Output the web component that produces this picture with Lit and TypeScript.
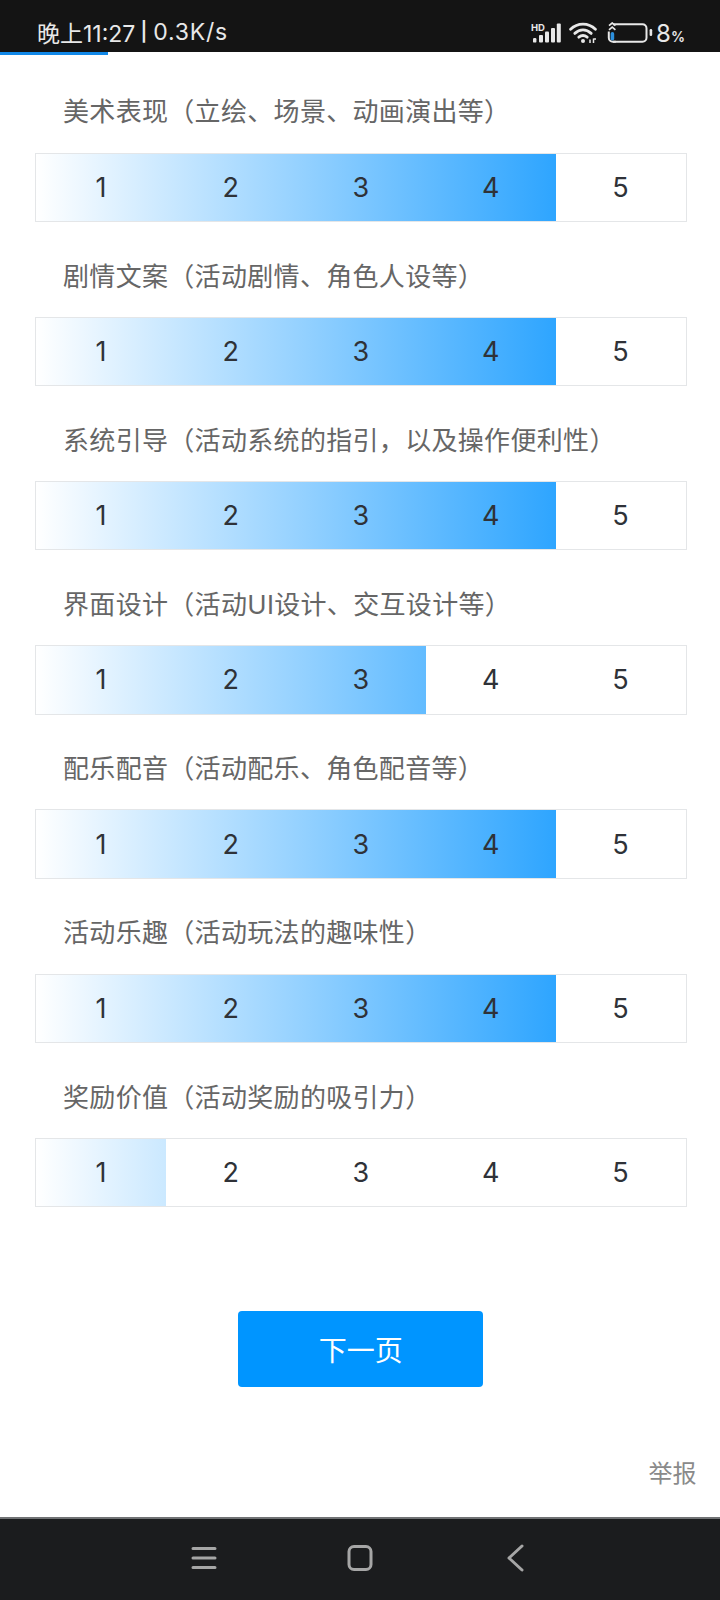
import { LitElement, html, css, svg } from "lit";
import { customElement } from "lit/decorators.js";

const rows: [string, number][] = [
  ["美术表现（立绘、场景、动画演出等）", 4],
  ["剧情文案（活动剧情、角色人设等）", 4],
  ["系统引导（活动系统的指引，以及操作便利性）", 4],
  ["界面设计（活动UI设计、交互设计等）", 3],
  ["配乐配音（活动配乐、角色配音等）", 4],
  ["活动乐趣（活动玩法的趣味性）", 4],
  ["奖励价值（活动奖励的吸引力）", 1],
];

@customElement("app-root")
export class AppRoot extends LitElement {
  static styles = css`
    :host {
      display: flex;
      flex-direction: column;
      width: 720px;
      height: 1600px;
      background: #fff;
      font-family: Inter, "Noto Sans CJK SC", sans-serif;
      overflow: hidden;
    }
    .status {
      height: 52px;
      flex: none;
      background: #141414;
      color: #e8e8e8;
      display: flex;
      align-items: center;
      justify-content: space-between;
      padding: 11px 35px 0 37px;
      box-sizing: border-box;
      font-size: 23px;
    }
    .time { display: flex; align-items: center; }
    .sep { font-size: 19px; font-weight: 600; margin: 0 6px 0 5px; }
    .speed { letter-spacing: 0.8px; }
    .icons { display: flex; align-items: center; margin-top: 3px; }
    .icons .w { margin-left: 8px; }
    .icons .b { margin-left: 9px; }
    .pct { display: flex; align-items: baseline; font-size: 24px; margin-left: 3px; }
    .pct small { font-size: 14px; font-weight: 600; }
    .progress { height: 3px; width: 108px; background: #1188e8; flex: none; }
    .main {
      flex: 1;
      display: flex;
      flex-direction: column;
      padding: 0 33.5px 0 35px;
    }
    .title {
      height: 94.7px;
      padding: 36.5px 0 0 28px;
      box-sizing: border-box;
      font-size: 26px;
      letter-spacing: 0.32px;
      line-height: 36px;
      color: #666;
    }
    .title.first { height: 97.6px; padding-top: 39px; }
    .bar {
      display: grid;
      grid-template-columns: repeat(5, 1fr);
      height: 69.5px;
      border: 1px solid #e4e6e8;
      box-sizing: border-box;
      background-image:
        linear-gradient(90deg, transparent var(--cut), #fff var(--cut)),
        linear-gradient(90deg, #fff 0%, #2ea5ff 80%);
    }
    .cell {
      display: flex;
      align-items: center;
      justify-content: center;
      font-size: 27px;
      color: #2f3238;
    }
    .btn {
      align-self: center;
      margin: 104px 0 0 0;
      width: 245px;
      height: 76px;
      border-radius: 4px;
      background: #0095ff;
      color: #fff;
      font-size: 28px;
      display: flex;
      align-items: center;
      justify-content: center;
    }
    .report {
      align-self: flex-end;
      margin: 69px -10px 0 0;
      font-size: 24px;
      line-height: 36px;
      color: #8a8a8a;
    }
    .nav {
      flex: none;
      height: 83px;
      border-top: 2px solid #707274;
      box-sizing: border-box;
      background: #1b1c1e;
      display: grid;
      grid-template-columns: repeat(3, 156px);
      justify-content: center;
      justify-items: center;
      align-items: center;
      padding-bottom: 4px;
    }
    svg { display: block; }
  `;

  private signal() {
    return svg`<svg width="30" height="22" viewBox="0 0 30 22" fill="#e8e8e8">
      <text x="0" y="8.5" font-size="9.5" font-weight="700" font-family="Inter, sans-serif">HD</text>
      <rect x="2" y="16" width="3.4" height="4.6" rx="1.2"/>
      <rect x="8" y="13" width="4" height="7.6" rx="1"/>
      <rect x="14" y="9.5" width="4" height="11.1" rx="1"/>
      <rect x="20" y="6" width="4" height="14.6" rx="1"/>
      <rect x="25.8" y="1.5" width="4" height="19.1" rx="1"/>
    </svg>`;
  }

  private wifi() {
    return svg`<svg class="w" width="29" height="22" viewBox="0 0 29 22" fill="none" stroke="#e8e8e8" stroke-width="2.8" stroke-linecap="round">
      <path d="M1.6 7.2C8.5 .4 19.5 .4 26.4 7.2"/>
      <path d="M5.8 11.4C10.8 6.8 17.2 6.8 22.2 11.4"/>
      <path d="M9.8 15.2C12.6 13 15.4 13 18.2 15.2"/>
      <circle cx="14" cy="19" r="2" fill="#e8e8e8" stroke="none"/>
      <path d="M21 21v-3.5M24.5 21v-4.5M24.5 17h2.5" stroke-width="1.5" stroke-linecap="butt"/>
    </svg>`;
  }

  private battery() {
    return svg`<svg class="b" width="46" height="22" viewBox="0 0 46 22" fill="none" stroke="#e8e8e8">
      <path d="M6 2.2h29.5a4 4 0 0 1 4 4v9.6a4 4 0 0 1-4 4H6" stroke-width="2"/>
      <path d="M1.8 9.5v6.3a4 4 0 0 0 4 4h3" stroke-width="2"/>
      <path d="M2 3.6l3.2-2.6 3.2 2.6M2 7.8l3.2-2.6 3.2 2.6" stroke-width="1.7"/>
      <rect x="3.6" y="10" width="3.6" height="8.6" rx="1.8" fill="#2c8fdc" stroke="none"/>
      <rect x="42.6" y="7" width="2.6" height="7" rx="1.2" fill="#e8e8e8" stroke="none"/>
    </svg>`;
  }

  render() {
    return html`
      <div class="status">
        <span class="time">晚上11:27<span class="sep">|</span><span class="speed">0.3K/s</span></span>
        <div class="icons">
          ${this.signal()}${this.wifi()}${this.battery()}
          <span class="pct">8<small>%</small></span>
        </div>
      </div>
      <div class="progress"></div>
      <div class="main">
        ${rows.map(
          ([t, v], i) => html`
            <div class="title ${i === 0 ? "first" : ""}">${t}</div>
            <div class="bar" style="--cut:${v * 20}%">
              ${[1, 2, 3, 4, 5].map((n) => html`<div class="cell">${n}</div>`)}
            </div>
          `
        )}
        <div class="btn">下一页</div>
        <div class="report">举报</div>
      </div>
      <div class="nav">
        <svg width="26" height="24" viewBox="0 0 26 24" fill="none" stroke="#a6a6a6" stroke-width="3" stroke-linecap="round">
          <path d="M2 2.5h22M2 12h22M2 21.5h22"/>
        </svg>
        <svg width="26" height="26" viewBox="0 0 26 26" fill="none" stroke="#a6a6a6" stroke-width="3">
          <rect x="2" y="1.5" width="22" height="23" rx="5"/>
        </svg>
        <svg width="20" height="28" viewBox="0 0 20 28" fill="none" stroke="#a6a6a6" stroke-width="3" stroke-linecap="round" stroke-linejoin="round">
          <path d="M16 2L3 14l13 12"/>
        </svg>
      </div>
    `;
  }
}
